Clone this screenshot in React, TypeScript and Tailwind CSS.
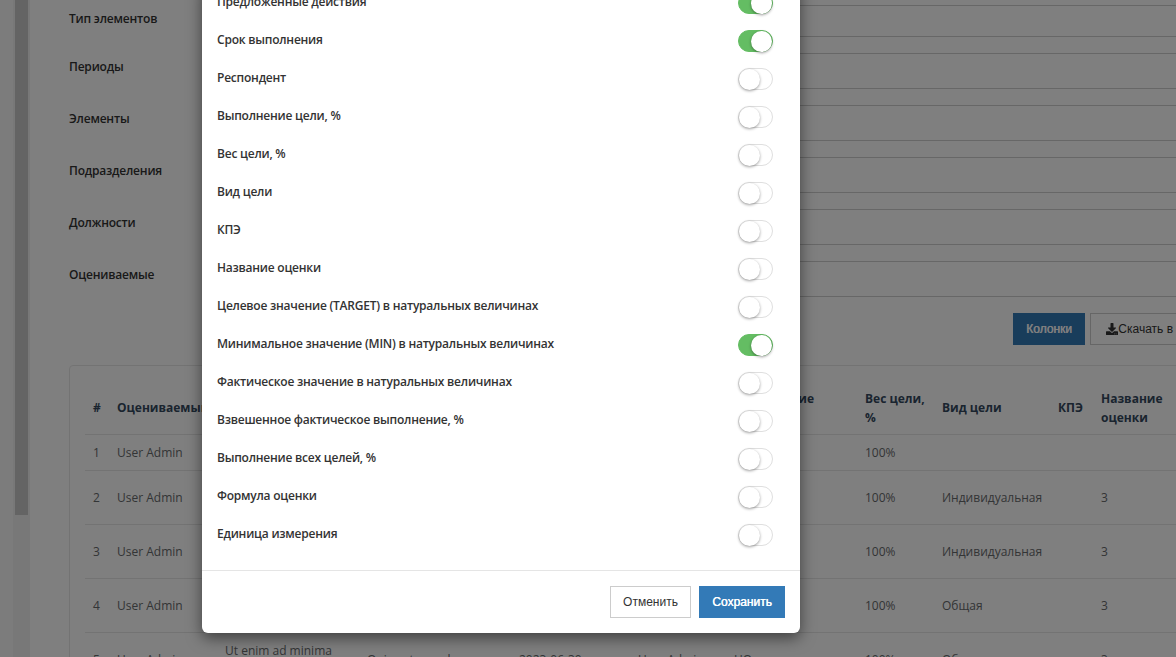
import { FaDownload } from "react-icons/fa";

const formRows = [
  { label: "Тип элементов", height: "h-[32px]" },
  { label: "Периоды", height: "h-[36px]" },
  { label: "Элементы", height: "h-[36px]" },
  { label: "Подразделения", height: "h-[36px]" },
  { label: "Должности", height: "h-[36px]" },
  { label: "Оцениваемые", height: "h-[36px]" },
];

const columns = [
  { title: "Предложенные действия", on: true },
  { title: "Срок выполнения", on: true },
  { title: "Респондент", on: false },
  { title: "Выполнение цели, %", on: false },
  { title: "Вес цели, %", on: false },
  { title: "Вид цели", on: false },
  { title: "КПЭ", on: false },
  { title: "Название оценки", on: false },
  { title: "Целевое значение (TARGET) в натуральных величинах", on: false },
  { title: "Минимальное значение (MIN) в натуральных величинах", on: true },
  { title: "Фактическое значение в натуральных величинах", on: false },
  { title: "Взвешенное фактическое выполнение, %", on: false },
  { title: "Выполнение всех целей, %", on: false },
  { title: "Формула оценки", on: false },
  { title: "Единица измерения", on: false },
];

const rows = [
  { id: 1, goal: "", action: "", date: "", resp: "", unit: "", weight: "100%", kind: "", score: "", tall: false },
  { id: 2, goal: "Ut enim ad minima veniam", action: "Quis autem vel", date: "2023-06-30", resp: "User Admin", unit: "HO", weight: "100%", kind: "Индивидуальная", score: "3", tall: true },
  { id: 3, goal: "Ut enim ad minima veniam", action: "Quis autem vel", date: "2023-06-30", resp: "User Admin", unit: "HO", weight: "100%", kind: "Индивидуальная", score: "3", tall: true },
  { id: 4, goal: "Ut enim ad minima veniam", action: "Quis autem vel", date: "2023-06-30", resp: "User Admin", unit: "HO", weight: "100%", kind: "Общая", score: "3", tall: true },
  { id: 5, goal: "Ut enim ad minima veniam", action: "Quis autem vel", date: "2023-06-30", resp: "User Admin", unit: "HO", weight: "100%", kind: "Общая", score: "3", tall: true },
];

const Toggle = ({ on }: { on: boolean }) => (
  <div
    className={`mt-[2px] flex h-[22px] w-[35px] items-center rounded-full border ${
      on ? "justify-end border-[#64bd63] bg-[#64bd63]" : "justify-start border-[#dfdfdf] bg-white"
    }`}
  >
    <div className="h-[21px] w-[21px] shrink-0 rounded-full bg-white shadow-[0_1px_3px_rgba(0,0,0,0.4)]" />
  </div>
);

const App = () => {
  return (
    <div className="relative flex h-[657px] w-[1176px] overflow-hidden bg-white font-['Open_Sans',sans-serif] text-xs text-[#676a6c]">
      <div className="flex w-[30px] shrink-0 bg-[#f8f8f8]">
        <div className="ml-[13px] w-[17px] bg-[#f0f0f0] px-[2px]">
          <div className="h-[515px] w-[13px] bg-[#c8c8c8]" />
        </div>
      </div>

      <div className="w-[1200px] shrink-0 pl-[39px] pt-[5px]">
        <div className="flex flex-col gap-4">
          {formRows.map((row) => (
            <div key={row.label} className="flex items-start">
              <label className="w-[200px] shrink-0 pt-[5px] font-semibold leading-[17px] tracking-[-0.2px] text-[#333]">{row.label}</label>
              <div className={`flex-1 border border-[#cfcfcf] ${row.height}`} />
            </div>
          ))}
        </div>

        <div className="mt-4 flex gap-[5px] pl-[944px] font-['Liberation_Sans',sans-serif]">
          <button className="h-8 w-[72px] shrink-0 bg-[#337ab7] text-white [text-shadow:0.4px_0_0_currentColor]">Колонки</button>
          <button className="flex h-8 w-[132px] shrink-0 items-center justify-center whitespace-nowrap border border-[#ccc] bg-white text-[#333]">
            <FaDownload className="h-3 w-3" />
            Скачать в Excel
          </button>
        </div>

        <div className="mt-5 rounded border border-[#e7e7e7] p-[15px]">
          <table className="w-[1115px] table-fixed border-collapse">
            <colgroup>
              <col className="w-[24px]" />
              <col className="w-[108px]" />
              <col className="w-[142px]" />
              <col className="w-[152px]" />
              <col className="w-[119px]" />
              <col className="w-[96px]" />
              <col className="w-[131px]" />
              <col className="w-[77px]" />
              <col className="w-[116px]" />
              <col className="w-[43px]" />
              <col className="w-[107px]" />
            </colgroup>
            <thead>
              <tr className="h-[53px] border-b border-[#e7e7e7] text-left align-middle font-bold leading-[19px] text-[#34495e]">
                <th className="px-2 pt-[1px]">#</th>
                <th className="whitespace-nowrap px-2 pt-[1px]">Оцениваемый</th>
                <th className="px-2 pt-[1px]">Цель</th>
                <th className="px-2 pt-[1px]">Действия</th>
                <th className="px-2 pt-[1px]">Срок</th>
                <th className="px-2 pt-[1px]">Респондент</th>
                <th className="px-2 pt-[1px]">Выполнение цели, %</th>
                <th className="px-2 pt-[1px]">Вес цели, %</th>
                <th className="px-2 pt-[1px]">Вид цели</th>
                <th className="px-2 pt-[1px]">КПЭ</th>
                <th className="px-2 pt-[1px]">Название оценки</th>
              </tr>
            </thead>
            <tbody>
              {rows.map((row) => (
                <tr key={row.id} className={`border-b border-[#e7e7e7] leading-[19px] ${row.tall ? "h-[54px]" : "h-[36px]"}`}>
                  <td className="px-2">{row.id}</td>
                  <td className="px-2">User Admin</td>
                  <td className="px-2 pt-[1px]">{row.goal}</td>
                  <td className="px-2">{row.action}</td>
                  <td className="px-2">{row.date}</td>
                  <td className="px-2">{row.resp}</td>
                  <td className="px-2">{row.unit}</td>
                  <td className="px-2">{row.weight}</td>
                  <td className="px-2">{row.kind}</td>
                  <td className="px-2" />
                  <td className="px-2">{row.score}</td>
                </tr>
              ))}
            </tbody>
          </table>
        </div>
      </div>

      <div className="absolute inset-0 bg-black/50" />

      <div className="absolute bottom-[24px] left-[202px] w-[598px] rounded-md bg-white shadow-[0_5px_15px_rgba(0,0,0,0.5)]">
        <div className="px-[15px] pb-[17px]">
          {columns.map((col) => (
            <div key={col.title} className="flex h-[38px] items-center justify-between pr-3">
              <span className="font-semibold tracking-[-0.22px] text-[#333]">{col.title}</span>
              <Toggle on={col.on} />
            </div>
          ))}
        </div>
        <div className="flex justify-end gap-2 border-t border-[#e5e5e5] p-[15px] font-['Liberation_Sans',sans-serif]">
          <button className="h-8 w-[81px] border border-[#ccc] bg-white text-[#333]">Отменить</button>
          <button className="h-8 w-[86px] bg-[#337ab7] text-white [text-shadow:0.4px_0_0_currentColor]">Сохранить</button>
        </div>
      </div>
    </div>
  );
};

export default App;
